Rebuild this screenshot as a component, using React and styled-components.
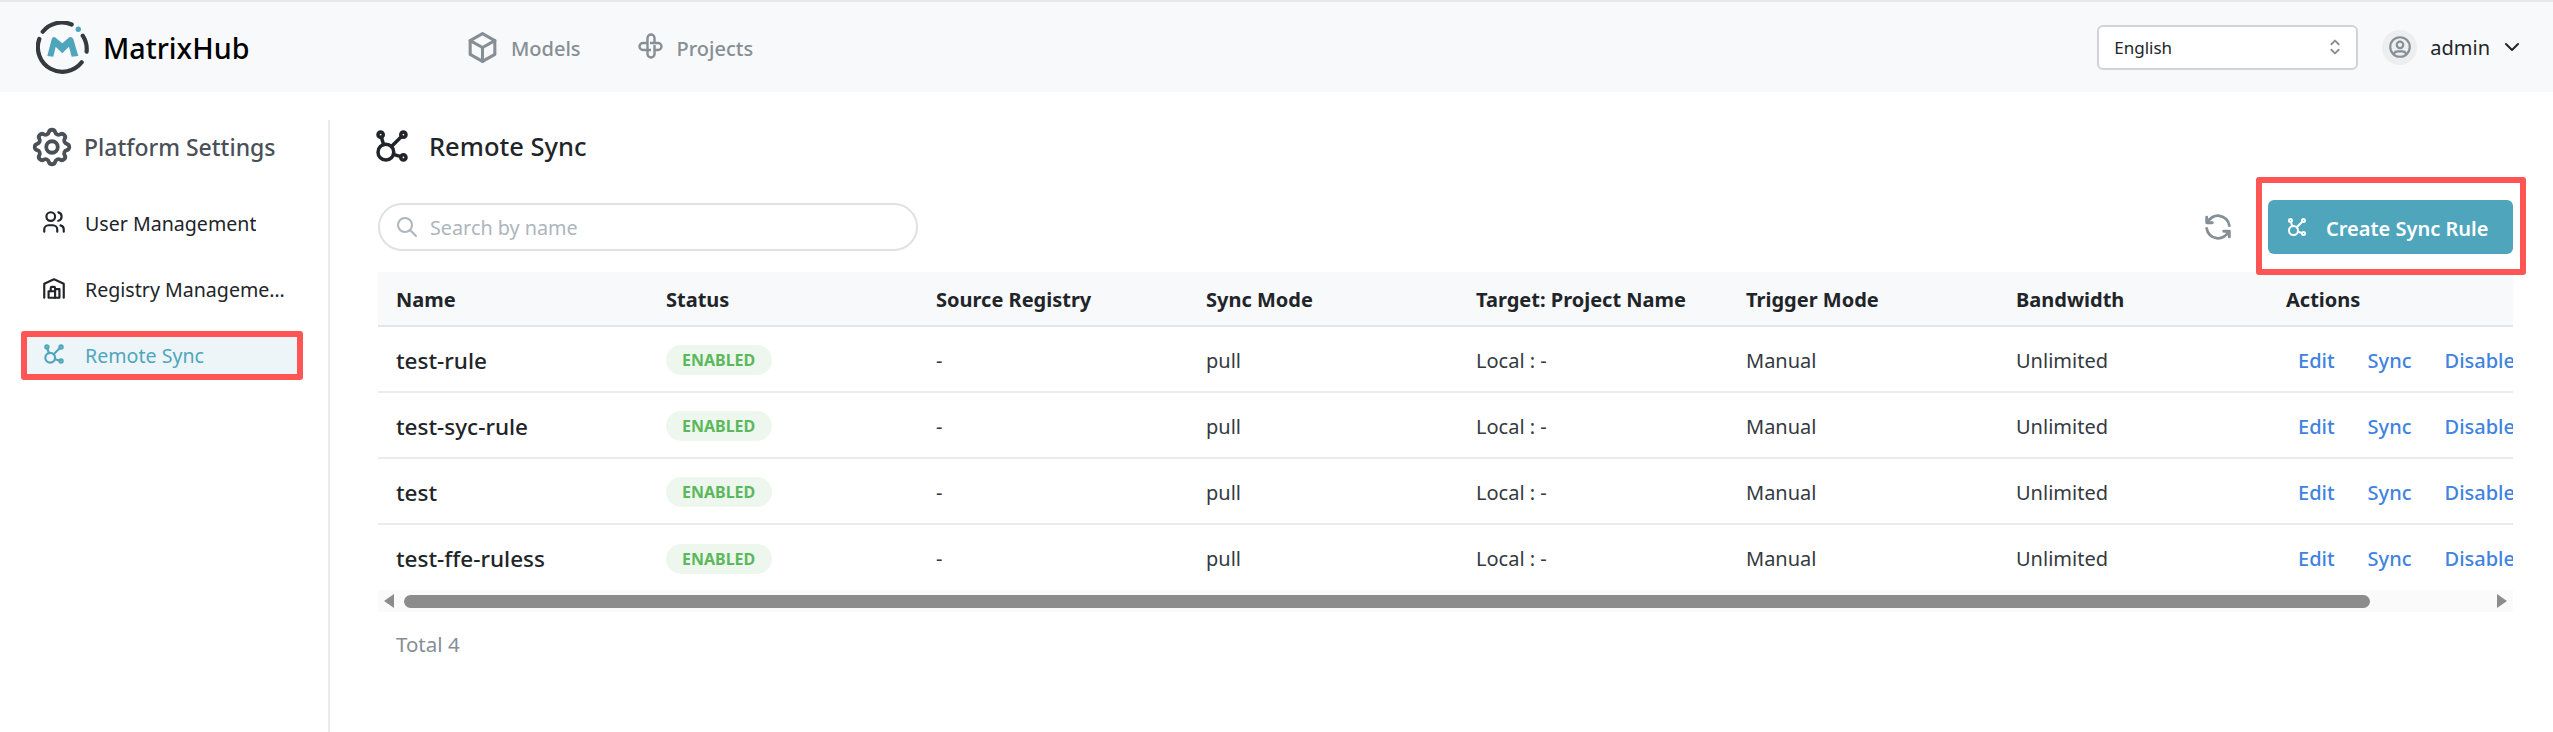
import React from 'react';
import styled, { createGlobalStyle } from 'styled-components';
import {
  TbAffiliate,
  TbBox,
  TbBuildingWarehouse,
  TbChevronDown,
  TbRefresh,
  TbSearch,
  TbSelector,
  TbSettings,
  TbUserCircle,
  TbUsers,
} from 'react-icons/tb';

const GlobalStyle = createGlobalStyle`
  * {
    box-sizing: border-box;
  }
  body {
    margin: 0;
    background: #fff;
    color: #212529;
    font-family: "Noto Sans", "Open Sans", sans-serif;
  }
`;

const Page = styled.div`
  min-height: 100vh;
  display: flex;
  flex-direction: column;
`;

const Header = styled.header`
  height: 92px;
  padding: 0 29px 0 36px;
  display: flex;
  align-items: center;
  background: #f8f9fa;
  border-top: 2px solid #e6e8eb;
`;
const Brand = styled.div`
  width: 428px;
  display: flex;
  align-items: center;
  gap: 14px;
  font-size: 28.7px;
  font-weight: 500;
  color: #000;
`;
const TopNav = styled.nav`
  display: flex;
  gap: 49px;
  flex: 1;
`;
const TopLink = styled.a`
  display: flex;
  align-items: center;
  gap: 10px;
  padding-top: 2px;
  font-size: 20px;
  font-weight: 500;
  color: #868e96;
  svg {
    margin-top: -2px;
  }
`;
const ProjectsLink = styled(TopLink)`
  gap: 7px;
`;
const LangSelect = styled.div`
  width: 261px;
  height: 45px;
  padding: 0 10px 0 15px;
  display: flex;
  align-items: center;
  justify-content: space-between;
  background: #fff;
  border: 2px solid #ced4da;
  border-radius: 6px;
  font-size: 17px;
  color: #212529;
  svg {
    color: #868e96;
  }
`;
const UserMenu = styled.div`
  margin-left: 24px;
  display: flex;
  align-items: center;
  font-size: 20px;
  color: #212529;
`;
const Avatar = styled.div`
  width: 35px;
  height: 35px;
  margin-right: 13px;
  display: flex;
  align-items: center;
  justify-content: center;
  border-radius: 50%;
  background: #eceeef;
  color: #868e96;
`;
const UserCaret = styled(TbChevronDown)`
  margin-left: 10px;
  color: #212529;
`;

const Body = styled.div`
  flex: 1;
  padding-top: 28px;
  display: flex;
`;
const Sidebar = styled.aside`
  width: 330px;
  padding: 4px 25px 0 21px;
  border-right: 2px solid #e9ecef;
`;
const SideTitle = styled.div`
  height: 46px;
  margin-bottom: 29px;
  padding-left: 8px;
  display: flex;
  align-items: center;
  gap: 9px;
  font-size: 23px;
  font-weight: 500;
  color: #495057;
`;
const SideList = styled.div`
  display: flex;
  flex-direction: column;
  gap: 17px;
`;
const SideItem = styled.a`
  height: 49px;
  padding: 0 12px 0 14px;
  display: flex;
  align-items: center;
  gap: 18px;
  font-size: 19.6px;
  color: ${(p) => (p.$active ? '#4fa6bc' : '#212529')};
  background: ${(p) => (p.$active ? '#edf5f8' : 'transparent')};
  border: 6px solid ${(p) => (p.$active ? '#ff5555' : 'transparent')};
  border-radius: 3px;
  svg {
    flex: none;
    margin-top: -4px;
  }
`;
const SideLabel = styled.span`
  white-space: nowrap;
  overflow: hidden;
  text-overflow: ellipsis;
`;

const Main = styled.main`
  flex: 1;
  min-width: 0;
  padding: 5px 40px 0 48px;
`;
const PageTitle = styled.h1`
  height: 42px;
  margin: 0 0 33px -7px;
  display: flex;
  align-items: center;
  gap: 16px;
  font-size: 25.5px;
  font-weight: 500;
  color: #212529;
`;
const Toolbar = styled.div`
  height: 54px;
  margin-bottom: 18px;
  display: flex;
  align-items: center;
  justify-content: space-between;
`;
const SearchBox = styled.div`
  width: 540px;
  height: 48px;
  padding: 0 15px;
  display: flex;
  align-items: center;
  gap: 11px;
  border: 2px solid #dee2e6;
  border-radius: 24px;
  font-size: 19.8px;
  color: #adb5bd;
`;
const ToolActions = styled.div`
  display: flex;
  align-items: center;
  gap: 33px;
  svg {
    display: block;
  }
`;
const RefreshIcon = styled(TbRefresh)`
  color: #868e96;
`;
const CreateButton = styled.button`
  position: relative;
  width: 245px;
  height: 54px;
  padding: 2px 0 0 17px;
  display: flex;
  align-items: center;
  gap: 17px;
  border: 0;
  border-radius: 6px;
  background: #4fa6bc;
  color: #fff;
  font-family: inherit;
  font-size: 20px;
  font-weight: 600;
  svg {
    margin-top: -2px;
  }
`;
// red annotation drawn over the screenshot
const Callout = styled.span`
  position: absolute;
  top: -23px;
  right: -13px;
  bottom: -21px;
  left: -12px;
  border: 6px solid #ff5555;
  border-radius: 3px;
  z-index: 1;
`;

const TableClip = styled.div`
  overflow: hidden;
`;
const Table = styled.table`
  width: 2160px;
  table-layout: fixed;
  border-collapse: collapse;
`;
const HeadCell = styled.th`
  height: 54px;
  padding: 2px 18px 0;
  background: #f8f9fa;
  border-bottom: 2px solid #e3e6e9;
  text-align: left;
  font-size: 20px;
  font-weight: 700;
  color: #212529;
`;
const Row = styled.tr`
  &:last-child td {
    border-bottom: 0;
  }
`;
const Cell = styled.td`
  height: 66px;
  padding: 2px 18px 0;
  border-bottom: 2px solid #e9ecef;
  font-size: 20px;
  color: #343a40;
`;
const NameCell = styled(Cell)`
  font-size: 22.5px;
  font-weight: 500;
  color: #212529;
`;
const ActionCell = styled(Cell)`
  padding-left: 16px;
  padding-right: 0;
`;
const Badge = styled.span`
  height: 30px;
  padding: 0 17px 0 16px;
  display: inline-flex;
  align-items: center;
  border-radius: 15px;
  background: #eef7ee;
  color: #5cb85c;
  font-size: 16px;
  font-weight: 700;
`;
const Actions = styled.div`
  display: flex;
  gap: 5px;
  white-space: nowrap;
`;
const ActionLink = styled.a`
  padding: 0 14px;
  font-size: 20px;
  font-weight: 500;
  color: #3f83e0;
`;

const ScrollBar = styled.div`
  height: 22px;
  padding: 0 6px;
  display: flex;
  align-items: center;
  background: #fafafa;
`;
const Arrow = styled.span`
  width: 0;
  height: 0;
  border-top: 7px solid transparent;
  border-bottom: 7px solid transparent;
  ${(p) => (p.$right ? 'border-left: 10px solid #8c8c8c;' : 'border-right: 10px solid #8c8c8c;')}
`;
const ScrollTrack = styled.div`
  flex: 1;
  padding: 0 10px;
`;
const ScrollThumb = styled.div`
  height: 13px;
  border-radius: 7px;
  background: #8c8c8c;
`;
const Total = styled.div`
  margin-top: 18px;
  padding-left: 18px;
  font-size: 20.5px;
  color: #868e96;
`;

const columns = [
  'Name',
  'Status',
  'Source Registry',
  'Sync Mode',
  'Target: Project Name',
  'Trigger Mode',
  'Bandwidth',
  'Actions',
];
const rules = ['test-rule', 'test-syc-rule', 'test', 'test-ffe-ruless'];

const Logo = () => (
  <svg width="53" height="53" viewBox="0 0 53 53" fill="none">
    <g stroke="#343a40" strokeWidth="4.2" strokeLinecap="round">
      <path d="M6.7 10.7A24.5 24.5 0 0 1 35.7 3.5" />
      <path d="M3.3 18A24.5 24.5 0 0 0 45.7 41.3" />
      <path d="M46.7 14.7A24.5 24.5 0 0 1 50.6 30.7" />
    </g>
    <circle cx="42.3" cy="8.3" r="2.7" fill="#4fa6bc" />
    <path
      d="M11.3 35L15.7 18Q17 15.5 19 16.3L26.3 22.3L33.3 16.3Q36 15.5 37.3 18L42.3 35L35.7 35.7L33 25.7L26.3 32.3L19.7 25.7L17.3 35.7Z"
      fill="#4fa6bc"
    />
  </svg>
);

// four interlocked pills, no matching icon in the packages
const ProjectsIcon = () => (
  <svg width="40" height="40" viewBox="0 0 40 40" fill="none" stroke="currentColor" strokeWidth="2.4">
    <path d="M17.5 22V11a3.5 3.5 0 0 1 7 0V16" />
    <path d="M20 16H28a3.5 3.5 0 0 1 0 7H24.5" />
    <path d="M24.5 18V27a3.5 3.5 0 0 1-7 0V23" />
    <path d="M21 23H13a3.5 3.5 0 0 1 0-7H17.5" />
  </svg>
);

const App = () => {
  return (
    <Page>
      <GlobalStyle />
      <Header>
        <Brand>
          <Logo />
          MatrixHub
        </Brand>
        <TopNav>
          <TopLink>
            <TbBox size={37} />
            Models
          </TopLink>
          <ProjectsLink>
            <ProjectsIcon />
            Projects
          </ProjectsLink>
        </TopNav>
        <LangSelect>
          English
          <TbSelector size={22} />
        </LangSelect>
        <UserMenu>
          <Avatar>
            <TbUserCircle size={26} />
          </Avatar>
          admin
          <UserCaret size={24} />
        </UserMenu>
      </Header>
      <Body>
        <Sidebar>
          <SideTitle>
            <TbSettings size={46} />
            Platform Settings
          </SideTitle>
          <SideList>
            <SideItem>
              <TbUsers size={26} />
              <SideLabel>User Management</SideLabel>
            </SideItem>
            <SideItem>
              <TbBuildingWarehouse size={26} />
              <SideLabel>Registry Management</SideLabel>
            </SideItem>
            <SideItem $active>
              <TbAffiliate size={26} />
              <SideLabel>Remote Sync</SideLabel>
            </SideItem>
          </SideList>
        </Sidebar>
        <Main>
          <PageTitle>
            <TbAffiliate size={42} />
            Remote Sync
          </PageTitle>
          <Toolbar>
            <SearchBox>
              <TbSearch size={24} />
              Search by name
            </SearchBox>
            <ToolActions>
              <RefreshIcon size={34} />
              <CreateButton>
                <TbAffiliate size={24} />
                Create Sync Rule
                <Callout />
              </CreateButton>
            </ToolActions>
          </Toolbar>
          <TableClip>
            <Table>
              <thead>
                <tr>
                  {columns.map((c) => (
                    <HeadCell key={c}>{c}</HeadCell>
                  ))}
                </tr>
              </thead>
              <tbody>
                {rules.map((rule) => (
                  <Row key={rule}>
                    <NameCell>{rule}</NameCell>
                    <Cell>
                      <Badge>ENABLED</Badge>
                    </Cell>
                    <Cell>-</Cell>
                    <Cell>pull</Cell>
                    <Cell>Local : -</Cell>
                    <Cell>Manual</Cell>
                    <Cell>Unlimited</Cell>
                    <ActionCell>
                      <Actions>
                        <ActionLink>Edit</ActionLink>
                        <ActionLink>Sync</ActionLink>
                        <ActionLink>Disable</ActionLink>
                      </Actions>
                    </ActionCell>
                  </Row>
                ))}
              </tbody>
            </Table>
          </TableClip>
          <ScrollBar>
            <Arrow />
            <ScrollTrack>
              <ScrollThumb style={{ width: `${(1966 / 2083) * 100}%` }} />
            </ScrollTrack>
            <Arrow $right />
          </ScrollBar>
          <Total>Total 4</Total>
        </Main>
      </Body>
    </Page>
  );
};

export default App;
